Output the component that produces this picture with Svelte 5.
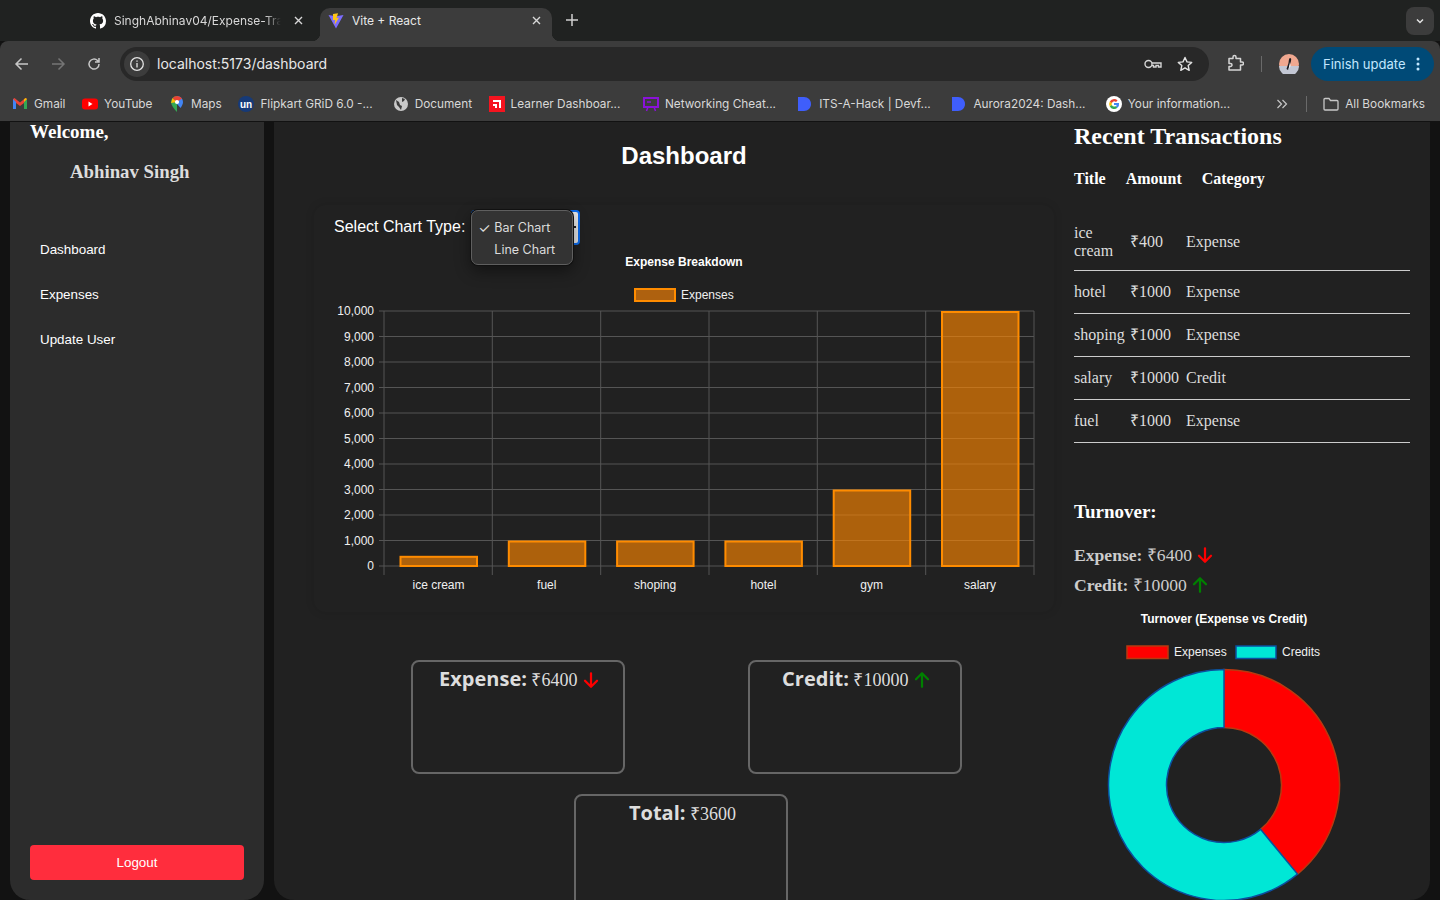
<script>
	const sans = 'Liberation Sans';

	const bookmarks = [
		{ label: 'Gmail', icon: '<path d="M1 3v10h3V7l4 3 4-3v6h3V3l-1.500-1L8 6.500 2.500 2z" fill="#ea4335"/><path d="M1 3v10h3V6z" fill="#4285f4"/><path d="M15 3v10h-3V6z" fill="#34a853"/><path d="M12 6l3-3-1.500-1L12 3.200z" fill="#fbbc04"/>' },
		{ label: 'YouTube', icon: '<rect x="0" y="2.500" width="16" height="11" rx="3" fill="#f00"/><path d="M6.500 5.500v5l4-2.500z" fill="#fff"/>' },
		{ label: 'Maps', icon: '<path d="M8 0a6 6 0 0 0-6 6c0 4 6 10 6 10z" fill="#34a853"/><path d="M8 0a6 6 0 0 1 6 6c0 2-1.200 4-2.400 6L8 8z" fill="#4285f4"/><path d="M3.500 2l4.500 4-6 1z" fill="#fbbc04"/><path d="M3.500 2.200A6 6 0 0 1 13 2.500L8 6z" fill="#ea4335"/><circle cx="8" cy="6" r="2.100" fill="#fff"/>' },
		{ label: 'Flipkart GRiD 6.0 -...', icon: '<circle cx="8" cy="8" r="8" fill="#163a78"/><text x="8" y="11.500" font-size="10" font-weight="700" fill="#fff" text-anchor="middle" font-family="Liberation Sans">un</text>' },
		{ label: 'Document', icon: '<circle cx="8" cy="8" r="7" fill="#c9c9c9"/><path d="M3 4l3 2 1 3 2 1-1 4-2-3-2-2zM9 2l3 1-1 2-2 1z" fill="#3c3c3c"/>' },
		{ label: 'Learner Dashboar...', icon: '<rect width="16" height="16" fill="#f5141f"/><path d="M4 4h8v8h-2V6H4zM4 8h4v4H6v-2H4z" fill="#fff"/>' },
		{ label: 'Networking Cheat...', icon: '<rect x="1" y="2" width="14" height="9" fill="none" stroke="#8a12d8" stroke-width="2"/><path d="M5 11l-1.500 4M11 11l1.500 4M4 6h4" stroke="#8a12d8" stroke-width="1.500"/>' },
		{ label: 'ITS-A-Hack | Devf...', icon: '<path d="M1 1h6c4 0 7 3 7 7s-3 7-7 7H1z" fill="#3f5efb"/>' },
		{ label: 'Aurora2024: Dash...', icon: '<path d="M1 1h6c4 0 7 3 7 7s-3 7-7 7H1z" fill="#3f5efb"/>' },
		{ label: 'Your information...', icon: '<circle cx="8" cy="8" r="8" fill="#fff"/><path d="M8 3a5 5 0 0 0-4.200 2.500l2 1.700A3 3 0 0 1 8 5.200a3 3 0 0 1 2 .8l1.600-1.600A5 5 0 0 0 8 3z" fill="#ea4335"/><path d="M3.800 5.500a5 5 0 0 0 0 5l2-1.600a3 3 0 0 1 0-1.800z" fill="#fbbc04"/><path d="M3.800 10.500a5 5 0 0 0 7.600 1.300L9.600 10.200a3 3 0 0 1-3.800-1.300z" fill="#34a853"/><path d="M8 7v2h2.800a3 3 0 0 1-1.200 1.200l1.800 1.600A5 5 0 0 0 13 7z" fill="#4285f4"/>' }
	];

	const ticks = Array.from({ length: 11 }, (_, i) => ({
		label: (i * 1000).toLocaleString('en-US'),
		y: 566 - i * 25.5
	}));
	const gridX = [384, 492.300, 600.700, 709, 817.300, 925.700, 1034];
	const bars = [
		{ name: 'ice cream', value: 400 },
		{ name: 'fuel', value: 1000 },
		{ name: 'shoping', value: 1000 },
		{ name: 'hotel', value: 1000 },
		{ name: 'gym', value: 3000 },
		{ name: 'salary', value: 10000 }
	];

	const transactions = [
		{ title: 'ice cream', amount: 400, category: 'Expense' },
		{ title: 'hotel', amount: 1000, category: 'Expense' },
		{ title: 'shoping', amount: 1000, category: 'Expense' },
		{ title: 'salary', amount: 10000, category: 'Credit' },
		{ title: 'fuel', amount: 1000, category: 'Expense' }
	];

	// donut slices
	const cx = 1224;
	const cy = 785;
	const R = 115.5;
	const r = 57.5;
	const split = (6400 / 16400) * Math.PI * 2;
	const pt = (rad, a) => `${cx + rad * Math.sin(a)} ${cy - rad * Math.cos(a)}`;
	const expenseArc = `M${pt(R, 0)} A${R} ${R} 0 0 1 ${pt(R, split)} L${pt(r, split)} A${r} ${r} 0 0 0 ${pt(r, 0)} Z`;
	const creditArc = `M${pt(R, split)} A${R} ${R} 0 1 1 ${pt(R, Math.PI * 2)} L${pt(r, Math.PI * 2)} A${r} ${r} 0 1 0 ${pt(r, split)} Z`;
</script>

{#snippet arrow(up, size)}
	<svg class="arrow" width={size} height={size} viewBox="0 0 24 24" fill="none" stroke={up ? '#008000' : '#ff0000'} stroke-width="3" stroke-linecap="round" stroke-linejoin="round">
		{#if up}
			<path d="M12 21V3M4 11l8-8 8 8" />
		{:else}
			<path d="M12 3v18M4 13l8 8 8-8" />
		{/if}
	</svg>
{/snippet}

{#snippet closeIcon()}
	<svg class="close" width="9" height="9" viewBox="0 0 9 9" stroke="#d8d8d8" stroke-width="1.400"><path d="M1 1l7 7M8 1L1 8" /></svg>
{/snippet}

<div class="window">
	<div class="tabstrip">
		<div class="tab">
			<svg width="16" height="16" viewBox="0 0 16 16" fill="#fff"><path d="M8 0C3.580 0 0 3.580 0 8c0 3.540 2.290 6.530 5.470 7.590.4.070.55-.17.55-.38 0-.19-.01-.82-.01-1.490-2.010.37-2.530-.49-2.690-.94-.09-.23-.48-.94-.82-1.130-.28-.15-.68-.52-.01-.53.63-.01 1.080.58 1.230.82.72 1.210 1.870.87 2.330.66.070-.52.280-.87.510-1.070-1.780-.2-3.640-.89-3.640-3.950 0-.87.310-1.590.820-2.150-.080-.2-.36-1.020.08-2.120 0 0 .67-.21 2.200.82.640-.18 1.320-.27 2-.27s1.360.09 2 .27c1.530-1.040 2.200-.82 2.200-.82.44 1.100.16 1.920.08 2.120.51.560.82 1.270.82 2.150 0 3.070-1.870 3.750-3.650 3.950.29.250.54.730.54 1.480 0 1.070-.01 1.930-.01 2.200 0 .21.150.46.550.38A8.010 8.010 0 0 0 16 8c0-4.420-3.580-8-8-8z"/></svg>
			<span class="tab-title fade">SinghAbhinav04/Expense-Tra</span>
			{@render closeIcon()}
		</div>
		<div class="tab active">
			<svg width="16" height="16" viewBox="0 0 16 16"><path d="M0.500 2L8 3.200 15.500 2 8 15.500z" fill="#7c6cff"/><path d="M5 1l5-.8-1.500 5 2.500-.6L6.500 12l.8-5.200L5 7.300z" fill="#ffc517"/></svg>
			<span class="tab-title">Vite + React</span>
			{@render closeIcon()}
		</div>
		<svg class="plus" width="12" height="12" viewBox="0 0 12 12" stroke="#d0d0d0" stroke-width="1.500"><path d="M6 0v12M0 6h12" /></svg>
		<div class="tab-search">
			<svg width="10" height="10" viewBox="0 0 10 10" fill="none" stroke="#e3e3e3" stroke-width="1.500"><path d="M2 3.500l3 3 3-3" /></svg>
		</div>
	</div>

	<div class="toolbar">
		<svg class="nav-icon" width="16" height="16" viewBox="0 0 16 16" fill="none" stroke="#c7c7c7" stroke-width="1.500"><path d="M14 8H2M7.500 2.500L2 8l5.500 5.500" /></svg>
		<svg class="nav-icon" width="16" height="16" viewBox="0 0 16 16" fill="none" stroke="#757575" stroke-width="1.500"><path d="M2 8h12M8.500 2.500L14 8l-5.500 5.500" /></svg>
		<svg class="nav-icon" width="16" height="16" viewBox="0 0 16 16" fill="none" stroke="#c7c7c7" stroke-width="1.500"><path d="M13 8a5 5 0 1 1-1.500-3.500L13 6M13 2v4H9" /></svg>
		<div class="omnibox">
			<div class="info">
				<svg width="16" height="16" viewBox="0 0 16 16" fill="none" stroke="#e3e3e3" stroke-width="1.300"><circle cx="8" cy="8" r="6.300" /><path d="M8 7v4.500M8 4.500v1.300" /></svg>
			</div>
			<span class="url">localhost:5173/dashboard</span>
			<svg class="key" width="18" height="12" viewBox="0 0 18 12" fill="none" stroke="#d5d5d5" stroke-width="1.400"><circle cx="4.500" cy="6" r="3.500" /><path d="M8 5h9v4h-2.500V7.500H12V9H9.500V7.500H8" /></svg>
			<svg class="star" width="16" height="16" viewBox="0 0 16 16" fill="none" stroke="#e3e3e3" stroke-width="1.400" stroke-linejoin="round"><path d="M8 1.500l2 4.400 4.700.5-3.500 3.200 1 4.700L8 11.900l-4.200 2.400 1-4.700L1.300 6.400 6 5.900z" /></svg>
		</div>
		<svg class="puzzle" width="18" height="18" viewBox="0 0 18 18" fill="none" stroke="#d5d5d5" stroke-width="1.500" stroke-linejoin="round"><path d="M3 4.500H7V3a1.500 1.500 0 0 1 3 0v1.500h4.500V8H16a1.500 1.500 0 0 1 0 3h-1.500v5H3v-3.500h1.500a1.500 1.500 0 0 0 0-3H3z" /></svg>
		<span class="tool-sep"></span>
		<svg class="avatar" width="20" height="20" viewBox="0 0 20 20"><circle cx="10" cy="10" r="10" fill="#f0a890" /><path d="M0 12h20a10 10 0 0 1-20 0z" fill="#c3c7d4" /><path d="M11 4c2 0 1 3 .5 5L9 16 7.500 15l2-6c.3-2 .5-5 1.500-5z" fill="#1c1c22" /><path d="M11 8l.6 4-2 3z" fill="#f2f2f2" /></svg>
		<div class="finish">
			<span>Finish update</span>
			<svg width="4" height="14" viewBox="0 0 4 14" fill="#c2e7ff"><circle cx="2" cy="2" r="1.500" /><circle cx="2" cy="7" r="1.500" /><circle cx="2" cy="12" r="1.500" /></svg>
		</div>
	</div>

	<div class="bookmarks">
		{#each bookmarks as b}
			<div class="bookmark">
				<svg width="16" height="16" viewBox="0 0 16 16">{@html b.icon}</svg>
				<span class:cut={b.label.endsWith('...')}>{b.label}</span>
			</div>
		{/each}
		<div class="bm-right">
			<svg width="12" height="10" viewBox="0 0 12 10" fill="none" stroke="#c7c7c7" stroke-width="1.200"><path d="M1.500 1l4 4-4 4M6.500 1l4 4-4 4" /></svg>
			<span class="bm-sep"></span>
			<div class="bookmark">
				<svg width="16" height="14" viewBox="0 0 16 14" fill="none" stroke="#c7c7c7" stroke-width="1.300"><path d="M1 2.500A1 1 0 0 1 2 1.500h4l1.500 2H14a1 1 0 0 1 1 1V12a1 1 0 0 1-1 1H2a1 1 0 0 1-1-1z" /></svg>
				<span>All Bookmarks</span>
			</div>
		</div>
	</div>

	<div class="page">
		<aside class="sidebar">
			<h2 class="welcome">Welcome,</h2>
			<h3 class="username">Abhinav Singh</h3>
			<nav>
				<a href="#dashboard">Dashboard</a>
				<a href="#expenses">Expenses</a>
				<a href="#update">Update User</a>
			</nav>
			<button class="logout">Logout</button>
		</aside>

		<main class="main">
			<section class="center">
				<h1>Dashboard</h1>
				<div class="card">
					<div class="select-row">
						<label for="chart-type">Select Chart Type:</label>
						<div class="select-wrap">
							<div id="chart-type" class="select-box"></div>
							<div class="popup">
								<div class="opt"><span class="check">✓</span>Bar Chart</div>
								<div class="opt"><span class="check"></span>Line Chart</div>
							</div>
						</div>
					</div>
					<svg class="bar-chart" width="740" height="367" viewBox="314 245 740 367" font-family={sans}>
						<text x="684" y="266" class="chart-title" text-anchor="middle">Expense Breakdown</text>
						<rect x="635" y="289" width="40" height="12" fill="#ae610f" stroke="#ff8c00" stroke-width="2" />
						<text x="681" y="299" class="tick">Expenses</text>
						{#each ticks as t}
							<line x1="379" x2="1034" y1={t.y} y2={t.y} stroke="#555" />
							<text x="374" y={t.y + 4} class="tick" text-anchor="end">{t.label}</text>
						{/each}
						{#each gridX as x}
							<line x1={x} x2={x} y1="311" y2="575" stroke="#555" />
						{/each}
						{#each bars as bar, i}
							<rect x={400.500 + i * 108.300} y={567 - bar.value * 0.0255} width="76.500" height={bar.value * 0.0255 - 1} class="bar" />
							<text x={438.500 + i * 108.300} y="589" class="tick" text-anchor="middle">{bar.name}</text>
						{/each}
					</svg>
				</div>
				<div class="stats first">
					<div class="stat"><b>Expense:</b> <span>₹6400</span> {@render arrow(false, 18)}</div>
					<div class="stat"><b>Credit:</b> <span>₹10000</span> {@render arrow(true, 18)}</div>
				</div>
				<div class="stats second">
					<div class="stat"><b>Total:</b> <span>₹3600</span></div>
				</div>
			</section>

			<section class="right">
				<h2 class="recent">Recent Transactions</h2>
				<div class="tx-head">
					<span>Title</span>
					<span>Amount</span>
					<span>Category</span>
				</div>
				<div class="tx-list">
					{#each transactions as tx}
						<div class="tx-row">
							<span>{tx.title}</span>
							<span>₹{tx.amount}</span>
							<span>{tx.category}</span>
						</div>
					{/each}
				</div>
				<h3 class="turnover">Turnover:</h3>
				<p class="sum"><b>Expense:</b> ₹6400 {@render arrow(false, 18)}</p>
				<p class="sum"><b>Credit:</b> ₹10000 {@render arrow(true, 18)}</p>
				<svg class="donut" width="336" height="300" viewBox="1074 600 336 300" font-family={sans}>
					<text x="1224" y="623" class="chart-title" text-anchor="middle">Turnover (Expense vs Credit)</text>
					<rect x="1127" y="646" width="41" height="12.500" fill="#ff0000" stroke="#b83a10" stroke-width="1.500" />
					<text x="1174" y="656" class="tick">Expenses</text>
					<rect x="1236" y="646" width="40" height="12.500" fill="#00e7d6" stroke="#0b4f9e" stroke-width="1.500" />
					<text x="1282" y="656" class="tick">Credits</text>
					<path d={expenseArc} fill="#ff0000" stroke="#b83a10" stroke-width="1.500" />
					<path d={creditArc} fill="#00e7d6" stroke="#0b4f9e" stroke-width="1.500" />
				</svg>
			</section>
		</main>
	</div>
</div>

<style>
	:global(body) {
		margin: 0;
		background: #121212;
		overflow: hidden;
	}

	.window {
		width: 1440px;
		height: 900px;
		overflow: hidden;
		display: flex;
		flex-direction: column;
		font-family: 'Liberation Sans', sans-serif;
	}

	/* browser chrome */
	.tabstrip {
		height: 41px;
		flex: none;
		background: #202221;
		display: flex;
		align-items: flex-end;
		padding-left: 82px;
		box-sizing: border-box;
		font-family: Inter, 'Liberation Sans', sans-serif;
	}

	.tab {
		width: 238px;
		height: 33px;
		box-sizing: border-box;
		padding: 0 17px 8px 8px;
		display: flex;
		align-items: center;
		gap: 8px;
		color: #d8d8d8;
		font-size: 12px;
		position: relative;
	}

	.tab.active {
		width: 232px;
		padding-right: 11px;
		background: #3c3c3c;
		border-radius: 10px 10px 0 0;
		color: #e8e8e8;
	}

	.tab.active::before,
	.tab.active::after {
		content: '';
		position: absolute;
		bottom: 0;
		width: 8px;
		height: 8px;
	}

	.tab.active::before {
		left: -8px;
		background: radial-gradient(circle at 0 0, transparent 8px, #3c3c3c 8.500px);
	}

	.tab.active::after {
		right: -8px;
		background: radial-gradient(circle at 100% 0, transparent 8px, #3c3c3c 8.500px);
	}

	.tab-title {
		flex: 1;
		white-space: nowrap;
		overflow: hidden;
	}

	.tab-title.fade {
		-webkit-mask-image: linear-gradient(to right, #000 88%, transparent 97%);
		mask-image: linear-gradient(to right, #000 88%, transparent 97%);
	}

	.close {
		flex: none;
	}

	.plus {
		margin: 0 0 15px 14px;
	}

	.tab-search {
		width: 28px;
		height: 28px;
		margin: 0 6px 6px auto;
		background: #3c3c3c;
		border-radius: 8px;
		display: flex;
		align-items: center;
		justify-content: center;
	}

	.toolbar {
		height: 40px;
		flex: none;
		background: #3c3c3c;
		border-radius: 8px 8px 0 0;
		display: flex;
		align-items: flex-end;
		padding-left: 14px;
		box-sizing: border-box;
		font-family: Inter, 'Liberation Sans', sans-serif;
	}

	.toolbar > svg {
		margin-bottom: 9px;
	}

	.nav-icon {
		margin-right: 20px;
	}

	.nav-icon:nth-child(3) {
		margin-right: 18px;
	}

	.omnibox {
		width: 1089px;
		height: 34px;
		background: #282828;
		border-radius: 17px;
		display: flex;
		align-items: center;
		box-sizing: border-box;
		padding-left: 4px;
		color: #e8e8e8;
	}

	.info {
		width: 26px;
		height: 26px;
		border-radius: 13px;
		background: #3c3c3c;
		display: flex;
		align-items: center;
		justify-content: center;
	}

	.url {
		font-size: 14px;
		margin: -1px 0 0 7px;
		flex: 1;
	}

	.star {
		margin: 0 16px 0 15px;
	}

	.puzzle {
		margin-left: 17px;
	}

	.tool-sep {
		width: 1px;
		height: 16px;
		background: #6a6a6a;
		margin: 0 17px 9px 17px;
	}

	.avatar {
		margin-bottom: 7px !important;
	}

	.finish {
		width: 123px;
		height: 34px;
		margin-left: 12px;
		border-radius: 17px;
		background: #004a77;
		color: #c2e7ff;
		font-size: 13px;
		display: flex;
		align-items: center;
		justify-content: space-between;
		padding: 0 14px 0 12px;
		box-sizing: border-box;
	}

	.bookmarks {
		height: 40px;
		flex: none;
		background: #3c3c3c;
		display: flex;
		align-items: center;
		gap: 16.600px;
		padding: 5px 15px 0 12px;
		box-sizing: border-box;
		font-family: Inter, 'Liberation Sans', sans-serif;
		font-size: 11.800px;
		color: #d8d8d8;
	}

	.bookmark {
		display: flex;
		align-items: center;
		gap: 6px;
		white-space: nowrap;
	}

	.bookmark span.cut {
		width: 115.700px;
	}

	.bm-right {
		margin-left: auto;
		display: flex;
		align-items: center;
	}

	.bm-sep {
		width: 1px;
		height: 16px;
		background: #6a6a6a;
		margin: 0 16px 0 18px;
	}

	/* page */
	.page {
		flex: 1;
		min-height: 0;
		display: flex;
		gap: 10px;
		padding: 1px 10px 0;
		background: #121212;
		color: #fff;
	}

	.sidebar {
		width: 254px;
		flex: none;
		background: #2c2c2c;
		border-radius: 0 0 20px 20px;
		padding: 0 20px 20px;
		box-sizing: border-box;
		display: flex;
		flex-direction: column;
		font-family: 'Liberation Serif', serif;
	}

	.welcome {
		margin: 0;
		font-size: 19px;
		line-height: 20px;
		font-weight: 700;
	}

	.username {
		margin: 20px 0 0 40px;
		font-size: 18.800px;
		line-height: 20px;
		font-weight: 700;
		color: #ddd;
	}

	nav {
		margin-top: 60px;
		display: flex;
		flex-direction: column;
		gap: 29px;
		padding-left: 10px;
	}

	nav a {
		font-family: 'Liberation Sans', sans-serif;
		font-size: 13.400px;
		line-height: 16px;
		color: #fff;
		text-decoration: none;
	}

	.logout {
		margin-top: auto;
		height: 35px;
		border: 0;
		border-radius: 4px;
		background: #ff2d3d;
		color: #fff;
		font-family: 'Liberation Sans', sans-serif;
		font-size: 13.400px;
		padding: 0;
	}

	.main {
		flex: 1;
		min-width: 0;
		background: #212121;
		border-radius: 0 0 20px 20px;
		padding: 0 20px 0 40px;
		display: flex;
		gap: 20px;
		overflow: hidden;
	}

	.center {
		width: 740px;
		flex: none;
	}

	h1 {
		margin: 19px 0 0;
		text-align: center;
		font-size: 24px;
		line-height: 30px;
		font-weight: 700;
	}

	.card {
		margin-top: 34px;
		height: 407px;
		border-radius: 12px;
		box-shadow: 0 0 10px rgba(0, 0, 0, 0.12);
	}

	.select-row {
		height: 40px;
		padding: 5px 0 0 20px;
		box-sizing: border-box;
		display: flex;
		align-items: center;
		gap: 6px;
		font-size: 16px;
	}

	.select-row label {
		margin-top: -2px;
	}

	.select-wrap {
		position: relative;
		width: 109px;
		height: 35px;
	}

	.select-box {
		width: 109px;
		height: 35px;
		box-sizing: border-box;
		background: #e8e8e8;
		border: 2px solid #0a6cf0;
		border-radius: 4px;
	}

	.select-box::after {
		content: '';
		position: absolute;
		left: 103px;
		top: 16px;
		width: 2px;
		height: 2px;
		background: #222;
	}

	.popup {
		position: absolute;
		left: 0;
		top: 0;
		width: 102px;
		height: 55px;
		box-sizing: border-box;
		padding-top: 6px;
		background: #333;
		border: 1px solid #5f5f5f;
		border-radius: 7px;
		box-shadow: 0 0 0 1px #111, 0 6px 16px rgba(0, 0, 0, 0.45);
		font-family: Inter, 'Liberation Sans', sans-serif;
		font-size: 12.500px;
		color: #dcdcdc;
	}

	.opt {
		height: 22px;
		line-height: 21px;
		display: flex;
	}

	.check {
		width: 22px;
		padding-left: 6px;
		box-sizing: border-box;
		font-size: 14px;
	}

	.bar-chart,
	.donut {
		display: block;
	}

	.bar {
		fill: rgba(255, 135, 0, 0.63);
		stroke: #ff8c00;
		stroke-width: 2;
	}

	.chart-title {
		font-size: 12px;
		font-weight: 700;
		fill: #fff;
	}

	.tick {
		font-size: 12px;
		fill: #f0f0f0;
	}

	.stats {
		display: flex;
		gap: 123px;
	}

	.stats.first {
		margin-top: 48px;
		padding-left: 97px;
	}

	.stats.second {
		margin-top: 20px;
		padding-left: 260px;
	}

	.stat {
		width: 214px;
		height: 114px;
		flex: none;
		box-sizing: border-box;
		border: 2px solid #666;
		border-radius: 8px;
		padding: 3px 0 0 3px;
		text-align: center;
		white-space: nowrap;
		font-family: 'Liberation Serif', serif;
		font-size: 18px;
		color: #ddd;
	}

	.stat b {
		font-family: 'Open Sans', sans-serif;
		font-size: 20px;
		font-weight: 700;
	}

	.arrow {
		vertical-align: -3px;
	}

	.right {
		width: 336px;
		flex: none;
		font-family: 'Liberation Serif', serif;
	}

	.recent {
		margin: 0;
		font-size: 24px;
		line-height: 28px;
		font-weight: 700;
	}

	.tx-head {
		margin-top: 19px;
		display: flex;
		gap: 20px;
		font-size: 16px;
		line-height: 20px;
		font-weight: 700;
	}

	.tx-list {
		margin-top: 25px;
	}

	.tx-row {
		display: grid;
		grid-template-columns: 56px 56px 1fr;
		align-items: center;
		min-height: 43px;
		padding: 10px 0;
		box-sizing: border-box;
		font-size: 16px;
		line-height: 18px;
		color: #ddd;
		border-bottom: 1px solid #ccc;
	}

	.tx-row span:first-child {
		padding-right: 4px;
	}

	.turnover {
		margin: 58px 0 0;
		font-size: 19px;
		line-height: 22px;
		font-weight: 700;
	}

	.sum {
		margin: 0;
		font-size: 17.600px;
		line-height: 30px;
		color: #ccc;
		white-space: nowrap;
	}

	.turnover + .sum {
		margin-top: 17px;
	}
</style>
